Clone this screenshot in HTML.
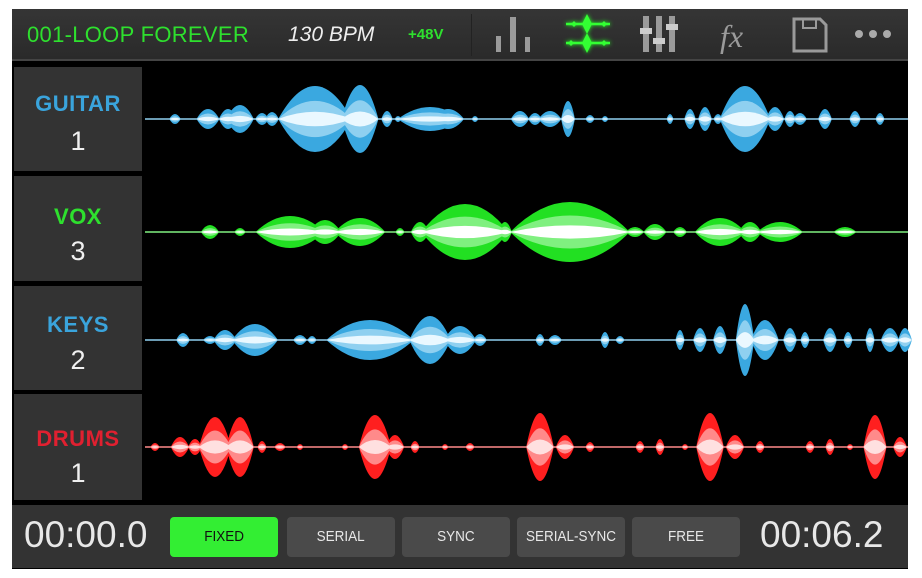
<!DOCTYPE html>
<html><head><meta charset="utf-8"><style>
*{margin:0;padding:0;box-sizing:border-box}
body{width:922px;height:578px;background:#fff;position:relative;overflow:hidden;font-family:"Liberation Sans",sans-serif}
#scr{position:absolute;left:12px;top:9px;width:896px;height:560px;background:#000}
#hdr{position:absolute;left:12px;top:9px;width:896px;height:52px;background:linear-gradient(#353535,#2a2a2a);border-bottom:2px solid #444}
.t{position:absolute;white-space:nowrap}
.lab{position:absolute;left:14px;width:128px;background:#333;text-align:center}
.lab .n{font-size:22px;font-weight:bold;letter-spacing:0.5px}
.lab .d{font-size:27px;color:#f0f0f0;margin-top:9px}
#ftr{position:absolute;left:12px;top:505px;width:896px;height:63px;background:#333}
.b{position:absolute;top:517px;height:40px;width:108px;background:#4a4a4a;border-radius:4px;color:#e8e8e8;font-size:15px;text-align:center;line-height:40px}
.b span{display:inline-block;transform:scaleX(0.9)}
</style></head><body>
<div id="scr"></div>
<div id="hdr"></div>
<div class="t" style="left:27px;top:22px;font-size:22px;color:#2ee02e;letter-spacing:0.3px">001-LOOP FOREVER</div>
<div class="t" style="left:288px;top:23px;font-size:21px;color:#eee;font-style:italic">130 BPM</div>
<div class="t" style="left:408px;top:26px;font-size:15px;color:#2ee02e;font-weight:bold">+48V</div>
<div style="position:absolute;left:471px;top:14px;width:1px;height:42px;background:#222"></div>
<svg style="position:absolute;left:0;top:0" width="922" height="70">
<g fill="#9a9a9a"><rect x="496" y="36" width="5" height="16"/><rect x="510" y="17" width="6" height="35"/><rect x="525" y="37" width="5" height="15"/></g>
<g fill="#33ff33" stroke="#33ff33" stroke-width="2.5" style="filter:drop-shadow(0 0 2px #2f2)">
<line x1="566" y1="24" x2="610" y2="24"/><line x1="566" y1="43" x2="610" y2="43"/>
<path d="M582 24 L587 14 L592 24 L587 34Z M571 24l3-3 3 3-3 3Z M601 24l3-3 3 3-3 3Z M582 43 L587 33 L592 43 L587 53Z M568 43l3-3 3 3-3 3Z M601 43l3-3 3 3-3 3Z" stroke="none"/></g>
<g fill="#9a9a9a"><rect x="643" y="16" width="6" height="36"/><rect x="656" y="16" width="6" height="36"/><rect x="669" y="16" width="6" height="36"/>
<rect x="640" y="28" width="12" height="6" fill="#ccc"/><rect x="653" y="38" width="12" height="6" fill="#ccc"/><rect x="666" y="24" width="12" height="6" fill="#ccc"/></g>
<text x="720" y="47" font-family="Liberation Serif,serif" font-style="italic" font-size="32" fill="#9a9a9a">fx</text>
<g fill="none" stroke="#9a9a9a" stroke-width="3"><path d="M794 19 H820 L826 25 V51 H794Z"/><rect x="803" y="19" width="13" height="9" stroke-width="2"/></g>
<g fill="#aaa"><circle cx="859" cy="34" r="4"/><circle cx="873" cy="34" r="4"/><circle cx="887" cy="34" r="4"/></g>
</svg>
<div class="lab" style="top:67px;height:104px;padding-top:24px"><div class="n" style="color:#3aa4dc">GUITAR</div><div class="d">1</div></div>
<div class="lab" style="top:176px;height:105px;padding-top:28px"><div class="n" style="color:#2ee02e">VOX</div><div class="d" style="margin-top:6px">3</div></div>
<div class="lab" style="top:286px;height:104px;padding-top:26px"><div class="n" style="color:#3aa4dc">KEYS</div><div class="d" style="margin-top:7px">2</div></div>
<div class="lab" style="top:394px;height:106px;padding-top:32px"><div class="n" style="color:#e02030">DRUMS</div><div class="d" style="margin-top:6px">1</div></div>
<svg id="wv" style="position:absolute;left:0;top:0" width="922" height="505"></svg>
<div id="ftr"></div>
<div class="t" style="left:24px;top:514px;font-size:37px;color:#e8e8e8">00:00.0</div>
<div class="b" style="left:170px;background:#33ee33;color:#111"><span>FIXED</span></div>
<div class="b" style="left:287px"><span>SERIAL</span></div>
<div class="b" style="left:402px"><span>SYNC</span></div>
<div class="b" style="left:517px"><span>SERIAL-SYNC</span></div>
<div class="b" style="left:632px"><span>FREE</span></div>
<div class="t" style="left:760px;top:514px;font-size:37px;color:#e8e8e8">00:06.2</div>
<script>
var T=[
[119,["#3aa8e0","#8fd0f0","#eaf8ff"],[[175,5,5],[208,10,10],[228,8,10],[240,12,14],[262,6,6],[272,6,7],[315,32,33],[360,16,34],[387,5,8],[398,3,3],[430,28,12],[448,14,10],[475,3,3],[520,8,8],[535,6,6],[550,10,8],[568,6,18],[590,4,4],[605,3,3],[670,3,5],[690,5,10],[705,6,12],[718,4,5],[745,22,33],[775,8,12],[790,5,8],[800,6,6],[825,6,10],[855,5,8],[880,4,6]]],
[232,["#22e022","#80f080","#ffffff"],[[210,8,7],[240,5,4],[290,30,16],[325,14,12],[360,22,14],[400,4,4],[420,8,10],[465,38,28],[505,6,10],[570,52,30],[635,8,5],[655,10,8],[680,6,5],[720,22,14],[750,10,10],[780,20,10],[845,10,5]]],
[340,["#3aa8e0","#8fd0f0","#eaf8ff"],[[183,6,7],[210,6,4],[225,10,10],[255,20,16],[300,6,5],[312,4,4],[370,38,20],[430,18,24],[460,14,14],[480,6,6],[540,4,6],[555,6,5],[605,4,8],[620,4,4],[680,4,10],[700,6,12],[720,6,14],[745,8,36],[765,12,20],[790,6,12],[805,4,8],[830,6,12],[848,4,8],[870,4,12],[890,8,12],[905,6,12]]],
[447,["#ff1f1f","#ff8a8a","#ffe0e0"],[[155,4,4],[180,8,10],[195,6,8],[215,14,30],[240,12,30],[262,4,6],[280,5,4],[300,3,3],[345,3,3],[375,14,32],[395,8,12],[415,4,6],[445,3,3],[470,4,4],[540,12,34],[565,8,12],[590,4,5],[640,4,6],[660,4,8],[685,3,3],[710,12,34],[735,8,12],[760,4,6],[810,4,6],[830,4,8],[850,3,3],[875,10,32],[900,6,10]]]];
var s='';
T.forEach(function(t){var y=t[0],c=t[1];
s+='<line x1="145" y1="'+y+'" x2="908" y2="'+y+'" stroke="'+c[1]+'" stroke-width="1.5"/>';
[[1,0],[0.55,1],[0.22,2]].forEach(function(L){t[2].forEach(function(b){var x=b[0],w=b[1]*1.15,h=b[2]*L[0];
s+='<path fill="'+c[L[1]]+'" d="M'+(x-w)+' '+y+' Q'+x+' '+(y-2*h)+' '+(x+w)+' '+y+' Q'+x+' '+(y+2*h)+' '+(x-w)+' '+y+'Z"/>';});});});
document.getElementById('wv').innerHTML=s;
</script>
</body></html>
